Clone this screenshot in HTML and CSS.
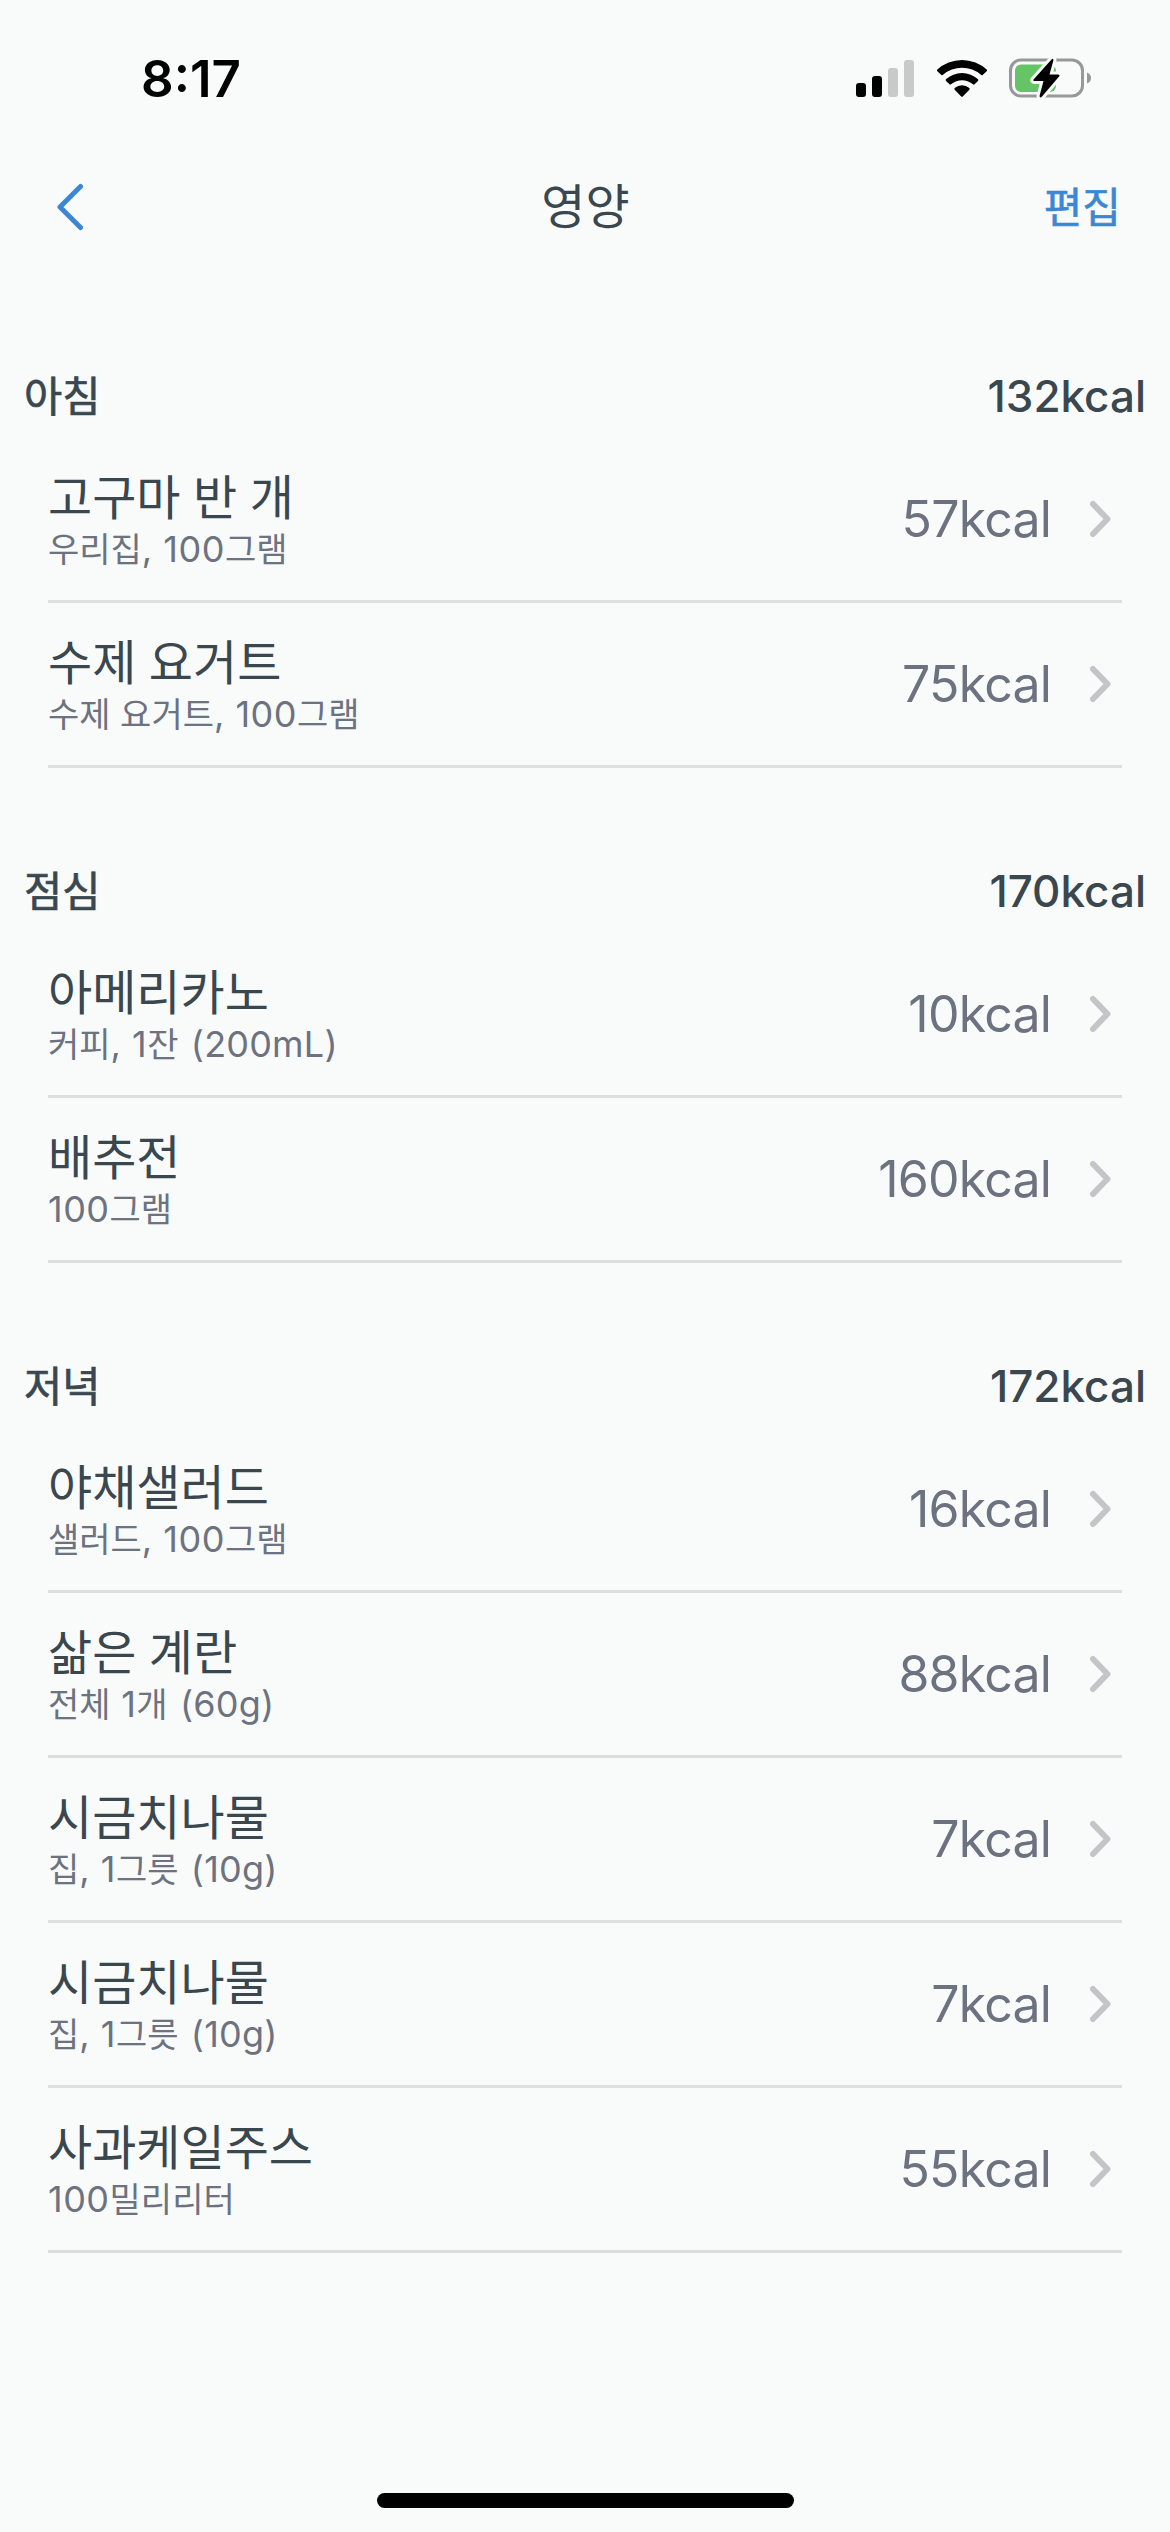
FILE: index.html
```html
<!DOCTYPE html>
<html lang="ko">
<head>
<meta charset="utf-8">
<title>영양</title>
<link rel="stylesheet" href="styles.css">
</head>
<body>
<svg class="defs" aria-hidden="true"><symbol id="chevron" viewBox="0 0 22 38"><path d="M4 4 18.5 19 4 34" fill="none" stroke="#c3c6c8" stroke-width="6" stroke-linecap="round" stroke-linejoin="round"/></symbol></svg>
<div class="screen">
  <div class="status">
    <span class="time">8:17</span>
    <div class="indicators">
      <svg width="58" height="37" viewBox="0 0 58 37"><rect y="23" width="10" height="14" rx="3"/><rect x="16" y="16" width="10" height="21" rx="3"/><rect x="32" y="8" width="10" height="29" rx="3" fill="#c8c9c9"/><rect x="48" width="10" height="37" rx="3" fill="#c8c9c9"/></svg>
      <svg class="wifi" width="50" height="37" viewBox="0 0 150 111"><path d="M0.2 29.4A110 110 0 0 1 149.8 29.4Q151 32 149 34L136 46Q134 46 132 44A88 88 0 0 0 18 44Q16 46 14 46L1 34Q-1 32 .2 29.4ZM26.700 58A71 71 0 0 1 123.300 58Q125 61 123 63L111 74Q109 74 107 72A50 50 0 0 0 43 72Q41 74 39 74L27 63Q25 61 26.700 58ZM53 84A34 34 0 0 1 97 84Q99 87 97 89L78 109Q75 112 72 109L53 89Q51 87 53 84Z"/></svg>
      <svg width="83" height="42" viewBox="0 0 83 42"><rect x="1.500" y="3" width="72" height="36" rx="10.500" fill="none" stroke="#979999" stroke-width="3"/><path d="M78 15.500Q82 17 82 21T78 26.500Z" fill="#979999"/><rect x="6" y="7.500" width="41" height="27.500" rx="6" fill="#65c466"/><path d="M42.500 2.500 24.500 22.500Q23.700 24 25.500 24H34.500L30.500 39Q31 41.500 33 39.500L50.500 19Q51 17.500 49 17.500H40.500L44.500 3Q44 1 42.500 2.500Z" stroke="#f9fbfa" stroke-width="6" stroke-linejoin="round" paint-order="stroke"/></svg>
    </div>
  </div>
  <header class="nav">
    <svg class="back" width="26" height="48" viewBox="0 0 26 48"><path d="M23.500 3.500 3 24 23.500 44.500" fill="none" stroke="#3c87d3" stroke-width="5" stroke-linecap="round" stroke-linejoin="round"/></svg>
    <h1>영양</h1>
    <span class="edit">편집</span>
  </header>
  <main>
    <section>
      <div class="meal"><h2>아침</h2><span>132kcal</span></div>
      <div class="row"><div class="food"><h3>고구마 반 개</h3><p>우리집<span>, 100</span>그램</p></div><span class="value">57kcal</span><svg class="go"><use href="#chevron"/></svg></div>
      <div class="row"><div class="food"><h3>수제 요거트</h3><p>수제 요거트<span>, 100</span>그램</p></div><span class="value">75kcal</span><svg class="go"><use href="#chevron"/></svg></div>
    </section>
    <section>
      <div class="meal"><h2>점심</h2><span>170kcal</span></div>
      <div class="row"><div class="food"><h3>아메리카노</h3><p>커피<span>, 1</span>잔<span class="unit"> (200mL)</span></p></div><span class="value">10kcal</span><svg class="go"><use href="#chevron"/></svg></div>
      <div class="row"><div class="food"><h3>배추전</h3><p><span>100</span>그램</p></div><span class="value">160kcal</span><svg class="go"><use href="#chevron"/></svg></div>
    </section>
    <section>
      <div class="meal"><h2>저녁</h2><span>172kcal</span></div>
      <div class="row"><div class="food"><h3>야채샐러드</h3><p>샐러드<span>, 100</span>그램</p></div><span class="value">16kcal</span><svg class="go"><use href="#chevron"/></svg></div>
      <div class="row"><div class="food"><h3>삶은 계란</h3><p>전체<span> 1</span>개<span class="unit"> (60g)</span></p></div><span class="value">88kcal</span><svg class="go"><use href="#chevron"/></svg></div>
      <div class="row"><div class="food"><h3>시금치나물</h3><p>집<span>, 1</span>그릇<span class="unit"> (10g)</span></p></div><span class="value">7kcal</span><svg class="go"><use href="#chevron"/></svg></div>
      <div class="row"><div class="food"><h3>시금치나물</h3><p>집<span>, 1</span>그릇<span class="unit"> (10g)</span></p></div><span class="value">7kcal</span><svg class="go"><use href="#chevron"/></svg></div>
      <div class="row"><div class="food"><h3>사과케일주스</h3><p><span>100</span>밀리리터</p></div><span class="value">55kcal</span><svg class="go"><use href="#chevron"/></svg></div>
    </section>
  </main>
  <div class="home"></div>
</div>
</body>
</html>
```
FILE: styles.css
```css
* { box-sizing: border-box; margin: 0; padding: 0; }
body { background: #f9fbfa; color: #3a474f; font-family: Inter, "Noto Sans CJK KR", sans-serif; }
h1, h2, h3 { font-weight: 400; }
svg { display: block; flex: none; }
.defs { width: 0; height: 0; position: absolute; }
.screen { width: 1170px; height: 2532px; display: flex; flex-direction: column; overflow: hidden; }
.status { height: 156px; padding: 0 78px 0 141px; display: flex; justify-content: space-between; align-items: center; color: #000; }
.time { font-size: 51px; font-weight: 600; letter-spacing: 0; }
.indicators { display: flex; align-items: center; gap: 22.500px; }
.wifi { overflow: visible; }
.nav { height: 117px; padding: 0 49px 16px 54px; display: grid; grid-template-columns: 1fr auto 1fr; align-items: center; }
.nav h1 { font-size: 48px; line-height: 60px; margin-left: -4px; }
.back { margin-left: 3px; }
.edit { justify-self: end; font-size: 42px; line-height: 60px; color: #3c87d3; padding-top: 3px; -webkit-text-stroke: 0.6px; }
.meal { height: 165px; padding: 82px 24px 0; display: flex; justify-content: space-between; align-items: baseline; line-height: 82px; font-weight: 500; font-size: 44px; }
.meal h2 { font-size: 41.5px; font-weight: 400; -webkit-text-stroke: 0.7px; }
.row { height: 165px; margin: 0 48px; display: flex; align-items: center; border-bottom: 3px solid #dddfdf; }
.food { flex: 1; padding-top: 7px; }
.food h3 { font-size: 48px; line-height: 54px; word-spacing: -1px; }
.food p { font-size: 34px; line-height: 50px; color: #6c7280; white-space: pre; }
.food p span { font-size: 36px; line-height: 1; letter-spacing: 0.5px; }
.food p .unit { letter-spacing: 0.2px; word-spacing: 2px; }
.value { font-size: 50px; line-height: 60px; letter-spacing: -0.8px; color: #6c7280; margin-right: 38px; }
.go { width: 22px; height: 38px; margin-right: 11px; }
.home { width: 417px; height: 15px; border-radius: 8px; background: #000; margin: auto auto 24px; }
```
